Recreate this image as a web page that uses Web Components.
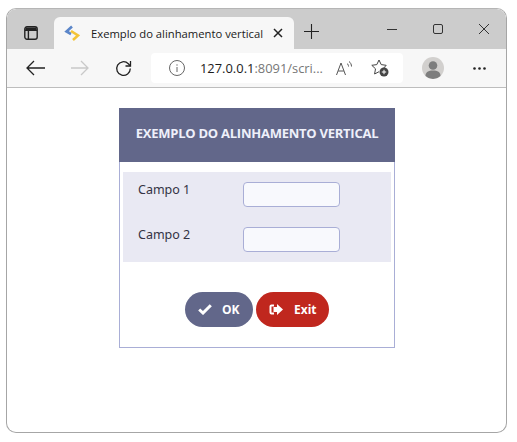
<!DOCTYPE html>
<html>
<head>
<meta charset="utf-8">
<title>Exemplo do alinhamento vertical</title>
<style>
html, body { margin: 0; padding: 0; background: #fff; }
</style>
</head>
<body>
<browser-window>
  <form-panel title-text="EXEMPLO DO ALINHAMENTO VERTICAL">
    <form-field label="Campo 1"></form-field>
    <form-field label="Campo 2"></form-field>
    <action-button slot="actions" kind="ok">OK</action-button>
    <action-button slot="actions" kind="exit">Exit</action-button>
  </form-panel>
</browser-window>

<script>
//browser chrome: tab strip
class BrowserTabs extends HTMLElement {
    constructor() {
        super();
        this.attachShadow({mode: 'open'});
        this.shadowRoot.innerHTML = `
        <style>
        :host { display: flex; height: 40px; background: #cccccc; align-items: flex-end; border-radius: 9px 9px 0 0; }
        svg { display: block; flex: none; }
        .side { margin: 0 16px 9px 17px; }
        .tab {
            width: 240px; height: 32px; background: #f7f7f7; border-radius: 6px 6px 0 0;
            display: flex; align-items: center; box-sizing: border-box; padding: 0 11px 0 10px;
            font: 11.25px "Open Sans", "Noto Sans", sans-serif; color: #1a1a1a;
        }
        .tab .name { flex: 1; margin-left: 10px; white-space: nowrap; }
        .plus { margin: 0 0 10px 10px; }
        .min { margin: 0 0 19px 68px; }
        .max { margin: 0 0 15px 36px; }
        .close { margin: 0 0 15px 36px; }
        </style>
        <svg class="side" width="14" height="14" viewBox="0 0 14 14" fill="none" stroke="#222" stroke-width="1.4"><rect x=".8" y=".8" width="12.4" height="12.4" rx="2.2"/><path d="M1 4.2h12M4.4 4.2v9" /><path d="M1.5 1.5h11v2.5h-11z" fill="#222" stroke="none"/></svg>
        <div class="tab">
            <svg width="17" height="16" viewBox="0 0 17 16" fill="none" stroke-width="2.6"><path d="M8 1.5 2.5 6.5 7 9" stroke="#5b86c9"/><path d="M7 6l7 4.5L9 15" stroke="#f4c436"/></svg>
            <span class="name">Exemplo do alinhamento vertical</span>
            <svg width="10" height="10" viewBox="0 0 10 10" stroke="#222" stroke-width="1.5"><path d="M1 1l8 8M9 1l-8 8"/></svg>
        </div>
        <svg class="plus" width="15" height="15" viewBox="0 0 15 15" stroke="#222" stroke-width="1.1"><path d="M7.5 0v15M0 7.500h15"/></svg>
        <svg class="min" width="10" height="1" viewBox="0 0 10 1" stroke="#333" stroke-width="2"><path d="M0 .5h10"/></svg>
        <svg class="max" width="10" height="10" viewBox="0 0 10 10" fill="none" stroke="#333"><rect x=".5" y=".5" width="9" height="9" rx="1.5"/></svg>
        <svg class="close" width="10" height="10" viewBox="0 0 10 10" stroke="#333"><path d="M0 0l10 10M10 0L0 10"/></svg>
        `;
    }
}

//browser chrome: toolbar with the address box
class BrowserToolbar extends HTMLElement {
    constructor() {
        super();
        this.attachShadow({mode: 'open'});
        this.shadowRoot.innerHTML = `
        <style>
        :host { display: flex; align-items: center; height: 38px; background: #f7f7f7; border-bottom: 1px solid #bdbdbd; box-sizing: content-box; }
        svg { display: block; flex: none; }
        .back { margin-left: 19px; }
        .fwd { margin-left: 26px; }
        .reload { margin-left: 26px; }
        .address {
            margin-left: 19px; width: 252px; height: 30px; background: #fff; border-radius: 4px;
            display: flex; align-items: center; box-sizing: border-box; padding-left: 18px;
            font: 12.9px "Open Sans", "Noto Sans", sans-serif; color: #777;
        }
        .url { margin-left: 15px; width: 136px; white-space: nowrap; }
        .url b { font-weight: 400; color: #1c1c1c; }
        .read { margin-left: 0; }
        .star { margin-left: 18px; }
        .avatar { margin-left: 19px; }
        .dots { margin-left: 29px; }
        </style>
        <svg class="back" width="19" height="16" viewBox="0 0 19 16" fill="none" stroke="#222" stroke-width="1.3"><path d="M19 8H1M8 1 1 8l7 7"/></svg>
        <svg class="fwd" width="18" height="16" viewBox="0 0 18 16" fill="none" stroke="#c9c9c9" stroke-width="1.3"><path d="M0 8h17M10 1l7 7-7 7"/></svg>
        <svg class="reload" width="17" height="17" viewBox="0 0 17 17" fill="none" stroke="#222" stroke-width="1.3"><path d="M15.300 8.500a6.800 6.800 0 1 1-2-4.800L15.500 6"/><path d="M15.500 1v5h-5"/></svg>
        <div class="address">
            <svg width="16" height="16" viewBox="0 0 16 16" fill="none" stroke="#666" stroke-width="1"><circle cx="8" cy="8" r="7.500"/><path d="M8 7v5M8 4.300v1.400"/></svg>
            <span class="url"><b>127.0.0.1</b>:8091/scri...</span>
            <svg class="read" width="17" height="15" viewBox="0 0 17 15" fill="none" stroke="#555" stroke-width="1"><path d="M.5 14 5 2l4.500 12M2.200 10h5.600M11 2.500c1 .7 1.500 1.700 1.500 3M13 .5c1.500 1 2.500 3 2.500 5"/></svg>
            <svg class="star" width="18" height="18" viewBox="0 0 18 18" fill="none" stroke="#444" stroke-width="1"><path d="M12.300 9.500 15.200 6.300 10.200 5.600 8 1 5.800 5.600 .8 6.300 4.500 9.800 3.600 15 8 12.700"/><circle cx="13" cy="13" r="4.500" fill="#444" stroke="none"/><path d="M13 10.800v4.400M10.800 13h4.400" stroke="#fff"/></svg>
        </div>
        <svg class="avatar" width="22" height="22" viewBox="0 0 22 22"><circle cx="11" cy="11" r="11" fill="#d2d0ce"/><circle cx="11" cy="8.500" r="4.300" fill="#7d7d7d"/><path d="M3.500 19c0-4 3-5.500 7.500-5.500s7.500 1.500 7.500 5.500a11 11 0 0 1-15 0z" fill="#7d7d7d"/></svg>
        <svg class="dots" width="13" height="3" viewBox="0 0 13 3" fill="#222"><circle cx="1.500" cy="1.500" r="1.300"/><circle cx="6.500" cy="1.500" r="1.300"/><circle cx="11.500" cy="1.500" r="1.300"/></svg>
        `;
    }
}

//window frame, page content goes in the slot
class BrowserWindow extends HTMLElement {
    constructor() {
        super();
        this.attachShadow({mode: 'open'});
        this.shadowRoot.innerHTML = `
        <style>
        :host { display: block; width: 501px; height: 425px; margin: 8px 0 0 6px; box-sizing: border-box; border: 1px solid #a6a6a6; border-top-color: #b5b5b5; border-radius: 10px; overflow: hidden; background: #fff; }
        .page { padding: 20px 0 0 112px; }
        </style>
        <browser-tabs></browser-tabs>
        <browser-toolbar></browser-toolbar>
        <div class="page"><slot></slot></div>
        `;
    }
}

//the form box
class FormPanel extends HTMLElement {
    constructor() {
        super();
        this.attachShadow({mode: 'open'});
        this.shadowRoot.innerHTML = `
        <style>
        :host { display: block; width: 276px; height: 240px; box-sizing: border-box; border: 1px solid #a9aed6; border-top: 0; font-family: "Noto Sans", "Open Sans", sans-serif; }
        .head { height: 54px; box-sizing: border-box; padding-bottom: 4px; margin: 0 -1px 0 -1px; background: #62678a; color: #eef0fa; display: flex; align-items: center; justify-content: center; font: 700 13px "Open Sans", "Noto Sans", sans-serif; white-space: nowrap; letter-spacing: -.25px; }
        .fields { margin: 10px 3px 0 3px; padding: 10px 0; height: 70px; background: #e9e9f3; display: flex; flex-direction: column; gap: 20px; }
        .actions { display: flex; justify-content: center; gap: 3px; margin-top: 30px; }
        </style>
        <div class="head"></div>
        <div class="fields"><slot></slot></div>
        <div class="actions"><slot name="actions"></slot></div>
        `;
        this.shadowRoot.querySelector('.head').textContent = this.getAttribute('title-text');
    }
}

//one label and input row
class FormField extends HTMLElement {
    constructor() {
        super();
        this.attachShadow({mode: 'open'});
        this.shadowRoot.innerHTML = `
        <style>
        :host { display: flex; height: 25px; }
        label { width: 120px; padding-left: 15px; box-sizing: border-box; font: 12.5px/16px "Noto Sans", "Open Sans", sans-serif; color: #333344; }
        input { width: 97px; height: 25px; box-sizing: border-box; margin: 0; padding: 0 6px; border: 1px solid #a9aed6; border-radius: 4px; background: #f8f9fd; outline: none; }
        </style>
        <label></label>
        <input type="text"/>
        `;
        this.shadowRoot.querySelector('label').textContent = this.getAttribute('label');
    }
}

//rounded button with an icon
class ActionButton extends HTMLElement {
    constructor() {
        super();
        const icons = {
            ok: '<svg width="14" height="11" viewBox="0 0 14 11" fill="none" stroke="#fff" stroke-width="3"><path d="M1.200 5.500 5 9l7.800-7.800"/></svg>',
            exit: '<svg width="14" height="11" viewBox="0 0 14 11"><path d="M5 1.500H2.500a1 1 0 0 0-1 1v6a1 1 0 0 0 1 1H5" fill="none" stroke="#fff" stroke-width="2"/><path d="M8 0l6 5.500L8 11V8H4.500V3H8z" fill="#fff"/></svg>'
        };
        const kind = this.getAttribute('kind');
        this.attachShadow({mode: 'open'});
        this.shadowRoot.innerHTML = `
        <style>
        :host { display: block; }
        button {
            display: flex; align-items: center; height: 35px; border: 0; margin: 0; border-radius: 18px;
            color: #fff; font: 700 12px "Open Sans", "Noto Sans", sans-serif; cursor: pointer;
        }
        .ok { width: 68px; background: #62678a; padding: 0 0 0 13px; gap: 10px; }
        .exit { width: 73px; background: #c0271e; padding: 0 0 0 13px; gap: 11px; }
        svg { display: block; flex: none; }
        </style>
        <button class="${kind}">${icons[kind]}<span><slot></slot></span></button>
        `;
    }
}

customElements.define('browser-tabs', BrowserTabs);
customElements.define('browser-toolbar', BrowserToolbar);
customElements.define('browser-window', BrowserWindow);
customElements.define('form-panel', FormPanel);
customElements.define('form-field', FormField);
customElements.define('action-button', ActionButton);
</script>
</body>
</html>
